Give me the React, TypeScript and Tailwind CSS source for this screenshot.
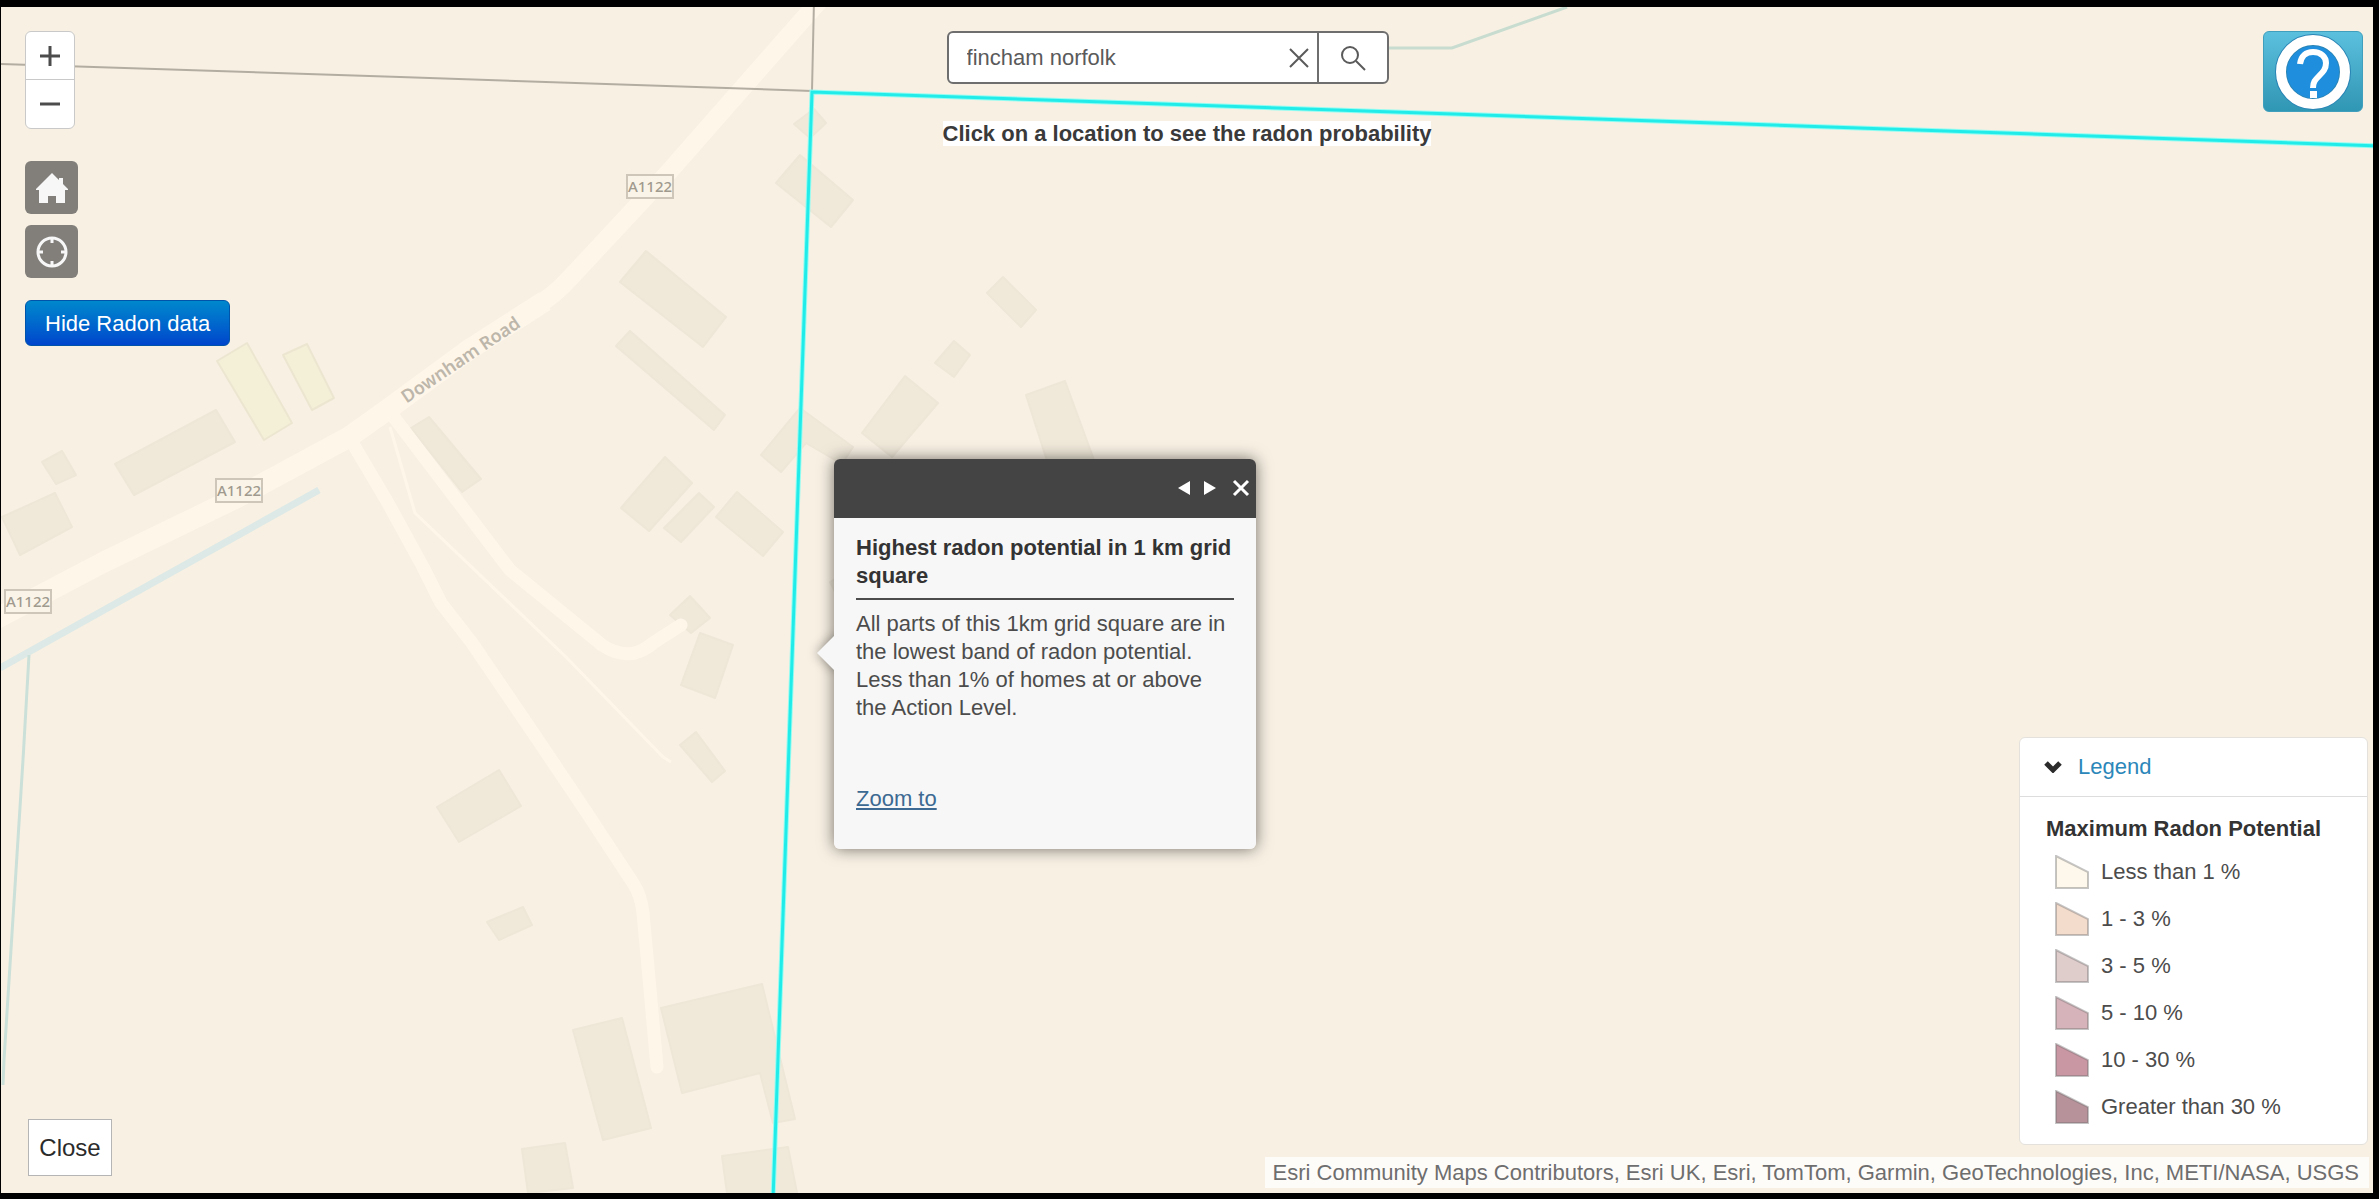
import { useState } from "react";

const buildings = [
  "814,109 826,123 810,138 794,124",
  "800,155 853,200 831,227 776,183",
  "646,251 726,317 703,347 620,282",
  "630,331 725,415 714,430 616,346",
  "665,457 692,483 649,531 621,508",
  "699,493 714,507 681,542 664,528",
  "737,492 783,532 763,556 716,517",
  "800,408 853,447 842,464 806,443 781,472 761,455",
  "905,376 938,403 892,457 862,433",
  "954,341 970,355 954,377 935,363",
  "1003,277 1036,310 1021,327 987,293",
  "1026,395 1065,381 1094,460 1050,470",
  "830,582 840,576 850,590 836,594",
  "2,517 55,493 72,527 20,555",
  "42,462 62,451 76,475 56,484",
  "115,464 216,410 235,442 134,495",
  "429,417 481,479 462,492 411,428",
  "690,596 710,618 691,633 670,615",
  "700,633 733,645 715,698 681,685",
  "696,732 725,771 712,782 680,745",
  "437,807 499,770 521,806 459,842",
  "487,922 523,907 532,925 499,940",
  "573,1030 622,1018 651,1128 603,1140",
  "661,1008 762,984 795,1119 773,1123 760,1073 682,1093",
  "522,1149 565,1143 573,1188 528,1193",
  "722,1156 788,1147 797,1193 727,1193",
];

const greenhouses = [
  "217,361 247,343 292,423 264,440",
  "283,355 307,344 334,398 312,410",
];

const roadBadges = [
  { x: 627, y: 175 },
  { x: 216, y: 479 },
  { x: 5, y: 590 },
];

const legendItems = [
  { label: "Less than 1 %", color: "#fef8ec" },
  { label: "1 - 3 %", color: "#f4dccd" },
  { label: "3 - 5 %", color: "#dfcdcc" },
  { label: "5 - 10 %", color: "#d6b3ba" },
  { label: "10 - 30 %", color: "#c996a3" },
  { label: "Greater than 30 %", color: "#b7929b" },
];

function BaseMap() {
  return (
    <svg
      className="absolute inset-0 h-full w-full"
      viewBox="1 7 2372 1186"
      preserveAspectRatio="xMidYMid slice"
      aria-hidden="true"
    >
      <g fill="#f0e9da" stroke="#eee6d7" strokeWidth="2" strokeLinejoin="round">
        {buildings.map((points) => (
          <polygon key={points} points={points} />
        ))}
      </g>
      <g fill="#f4efd7" stroke="#ece6d1" strokeWidth="2" strokeLinejoin="round">
        {greenhouses.map((points) => (
          <polygon key={points} points={points} />
        ))}
      </g>

      {/* streams */}
      <g fill="none">
        <path d="M0 668L319 490" stroke="#dce9e6" strokeWidth="7" />
        <path d="M29 655L23 760L4 1060L3 1085" stroke="#cbe0d8" strokeWidth="3" />
        <path d="M1380 48H1452L1567 7" stroke="#c8ddd0" strokeWidth="3" />
      </g>

      {/* roads */}
      <g fill="none" stroke="#fff6ea" strokeLinejoin="round">
        <path d="M390 427L415 513L566 657L663 757L671 762" strokeWidth="3" />
        <path
          d="M349 437L388 503L423 567L441 603L472 643L538 740L587 813L633 883Q641 895 643 913L648 967L657 1067"
          strokeWidth="13"
          strokeLinecap="round"
        />
        <path
          d="M390 412L459 503L510 570L602 645Q618 656 635 653Q645 650 653 643L681 625"
          strokeWidth="13"
          strokeLinecap="round"
        />
        <path d="M820 0L667 174L570 278Q556 294 535 307" strokeWidth="18" />
        <path d="M545 301L470 349L387 410L349 437L238 497L102 563L-10 622" strokeWidth="21" />
      </g>

      {/* 1 km grid */}
      <path d="M0 64L400 77L812 91M812 91L814 0" fill="none" stroke="#b3aca1" strokeWidth="2" />
      <g fill="none">
        <path d="M773 1200L812 92L2380 146" stroke="#96fcf1" strokeWidth="5" />
        <path d="M773 1200L812 92L2380 146" stroke="#22ecea" strokeWidth="3" />
      </g>

      <g fontFamily="Noto Sans, Open Sans, sans-serif" fontWeight="500" fill="#a09a8e">
        {roadBadges.map((badge) => (
          <g key={badge.x}>
            <rect
              x={badge.x}
              y={badge.y}
              width="46"
              height="23"
              fill="#faf4e8"
              stroke="#cdc6b9"
              strokeWidth="2"
            />
            <text x={badge.x + 23} y={badge.y + 17} fontSize="15" textAnchor="middle">
              A1122
            </text>
          </g>
        ))}
        <text
          transform="translate(464 365) rotate(-34)"
          fontSize="18"
          fontWeight="600"
          textAnchor="middle"
          fill="#bdb6aa"
        >
          Downham Road
        </text>
      </g>
    </svg>
  );
}

function MapControls({
  showRadon,
  onToggle,
}: {
  showRadon: boolean;
  onToggle: () => void;
}) {
  return (
    <div className="ml-6 flex flex-col items-start justify-self-start">
      <div className="flex flex-col rounded-md border border-[#c9c9c9] bg-white">
        <button
          aria-label="Zoom in"
          className="flex h-12 w-12 items-center justify-center border-b border-[#c9c9c9]"
        >
          <svg width="20" height="20" viewBox="0 0 20 20" stroke="#4c4c4c" strokeWidth="3">
            <path d="M0 10H20M10 0V20" />
          </svg>
        </button>
        <button aria-label="Zoom out" className="flex h-12 w-12 items-center justify-center">
          <svg width="20" height="20" viewBox="0 0 20 20" stroke="#4c4c4c" strokeWidth="3">
            <path d="M0 10H20" />
          </svg>
        </button>
      </div>
      <button
        aria-label="Default extent"
        className="mt-8 flex h-[53px] w-[53px] items-center justify-center rounded-md bg-[#827f7b]"
      >
        <svg width="32" height="32" viewBox="0 0 32 32" fill="#f7f7f7">
          <path d="M16 1L23 8V6H27V12L32 17V18H29V31H20V24H12V31H3V18H0V17Z" />
        </svg>
      </button>
      <button
        aria-label="Find my location"
        className="mt-[11px] flex h-[53px] w-[53px] items-center justify-center rounded-md bg-[#827f7b]"
      >
        <svg width="32" height="32" viewBox="0 0 32 32" fill="none" stroke="#f7f7f7">
          <circle cx="16" cy="16" r="14" strokeWidth="3" />
          <path d="M16 2V7M16 25V30M2 16H7M25 16H30" strokeWidth="3" />
        </svg>
      </button>
      <button
        onClick={onToggle}
        className="mt-[22px] h-[46px] rounded-md border border-[#0055aa] bg-linear-to-b from-[#0088cc] to-[#0044cc] px-[19px] text-[22px] text-white"
      >
        {showRadon ? "Hide Radon data" : "Show Radon data"}
      </button>
    </div>
  );
}

function SearchBox() {
  const [query, setQuery] = useState("fincham norfolk");

  return (
    <div>
      <form
        onSubmit={(e) => e.preventDefault()}
        className="ml-1 flex h-[53px] w-[442px] rounded-md border-2 border-[#6e6e6e] bg-white"
      >
        <input
          type="text"
          aria-label="Find address or place"
          value={query}
          onChange={(e) => setQuery(e.target.value)}
          className="min-w-0 flex-1 pl-[18px] text-[22px] text-[#5a5a5a] outline-none"
        />
        <button
          type="button"
          aria-label="Clear search"
          onClick={() => setQuery("")}
          className="flex w-9 items-center justify-center"
        >
          <svg width="20" height="20" viewBox="0 0 20 20" stroke="#5a5a5a" strokeWidth="2">
            <path d="M1 1L19 19M19 1L1 19" />
          </svg>
        </button>
        <button
          type="submit"
          aria-label="Search"
          className="flex w-[70px] items-center justify-center border-l-2 border-[#6e6e6e]"
        >
          <svg width="26" height="26" viewBox="0 0 26 26" fill="none" stroke="#5a5a5a" strokeWidth="2">
            <circle cx="10" cy="10" r="8" />
            <path d="M16 16L25 25" />
          </svg>
        </button>
      </form>
      <p className="mt-9 text-[22px] leading-7 font-bold text-[#3a3a3a]">
        <span className="bg-white">Click on a location to see the radon probability</span>
      </p>
    </div>
  );
}

function HelpButton() {
  return (
    <button
      aria-label="Help"
      className="mr-2.5 flex h-[81px] w-[100px] items-center justify-center justify-self-end rounded-md border border-[#3f9fbd] bg-linear-to-b from-[#5bc0de] to-[#2f96b4]"
    >
      <svg width="76" height="76" viewBox="0 0 76 76" fill="none">
        <circle cx="38" cy="38" r="32" fill="#1f8fdd" stroke="#2a84b5" strokeWidth="12" />
        <circle cx="38" cy="38" r="32" stroke="#ffffff" strokeWidth="10" />
        <path
          d="M25 30C26 22 31 18 38 18C46 18 51 23 51 29C51 35 48 38 44 42C40 46 38 48 38 54"
          stroke="#ffffff"
          strokeWidth="6"
        />
        <rect x="35" y="57" width="7" height="7" fill="#ffffff" />
      </svg>
    </button>
  );
}

function RadonPopup({ onClose }: { onClose: () => void }) {
  return (
    <section className="absolute top-[452px] left-[833px] w-[422px] rounded-md shadow-[0_0_16px_rgba(0,0,0,0.55)]">
      <div className="absolute top-[182px] -left-3 h-6 w-6 rotate-45 bg-[#f7f7f7] shadow-[0_0_12px_rgba(0,0,0,0.4)]" />
      <header className="relative flex h-[59px] items-center justify-end gap-3 rounded-t-md bg-[#444444] pr-1.5 pb-0.5">
        <button aria-label="Previous feature" className="w-3.5">
          <svg width="12" height="14" viewBox="0 0 12 14" fill="#ffffff">
            <path d="M12 0V14L0 7Z" />
          </svg>
        </button>
        <button aria-label="Next feature" className="w-3.5">
          <svg width="12" height="14" viewBox="0 0 12 14" fill="#ffffff">
            <path d="M0 0V14L12 7Z" />
          </svg>
        </button>
        <button aria-label="Close popup" onClick={onClose} className="ml-0.5">
          <svg width="18" height="18" viewBox="0 0 18 18" stroke="#ffffff" strokeWidth="3">
            <path d="M2 2L16 16M16 2L2 16" />
          </svg>
        </button>
      </header>
      <div className="relative rounded-b-md bg-[#f7f7f7] px-[22px] pt-4 pb-9 text-[22px] leading-7 text-[#4c4c4c]">
        <h2 className="border-b-2 border-[#4c4c4c] pb-2 font-bold text-[#333333]">
          Highest radon potential in 1 km grid square
        </h2>
        <p className="mt-2.5">
          All parts of this 1km grid square are in the lowest band of radon potential. Less than 1%
          of homes at or above the Action Level.
        </p>
        <a href="#" className="mt-[63px] inline-block text-[#3d6a92] underline">
          Zoom to
        </a>
      </div>
    </section>
  );
}

function Legend() {
  const [open, setOpen] = useState(true);

  return (
    <section className="mr-[5px] w-[349px] rounded-md border border-[#e4e1dc] bg-white text-[22px] leading-7">
      <button
        onClick={() => setOpen(!open)}
        className="flex h-[59px] w-full items-center gap-4 border-b border-[#dddddd] pl-6 text-[#2b87b9]"
      >
        <svg width="18" height="12" viewBox="0 0 18 12" fill="none" stroke="#2b2b2b" strokeWidth="5">
          <path d="M2 2L9 9L16 2" />
        </svg>
        Legend
      </button>
      {open && (
        <div className="pt-[18px] pb-3.5">
          <h2 className="pl-[26px] font-bold text-[#333333]">Maximum Radon Potential</h2>
          <ul className="mt-[5px]">
            {legendItems.map((item) => (
              <li key={item.label} className="flex h-[47px] items-center gap-3 pl-[35px] text-[#4c4c4c]">
                <svg width="34" height="34" viewBox="0 0 34 34">
                  <path
                    d="M1 1L33 17V33H1Z"
                    fill={item.color}
                    stroke="#6e6e6e"
                    strokeOpacity="0.4"
                    strokeWidth="2"
                  />
                </svg>
                {item.label}
              </li>
            ))}
          </ul>
        </div>
      )}
    </section>
  );
}

export default function App() {
  const [showRadon, setShowRadon] = useState(true);
  const [showPopup, setShowPopup] = useState(true);

  return (
    <div className="flex min-h-screen bg-black pt-[7px] pr-1.5 pb-1.5 pl-px font-['Liberation_Sans',Arial,sans-serif]">
      <main className="relative flex flex-1 flex-col justify-between overflow-hidden bg-[#f8f0e3]">
        <BaseMap />
        {showPopup && <RadonPopup onClose={() => setShowPopup(false)} />}

        <div className="relative grid grid-cols-[1fr_auto_1fr] items-start pt-6">
          <MapControls showRadon={showRadon} onToggle={() => setShowRadon(!showRadon)} />
          <SearchBox />
          <HelpButton />
        </div>

        <div className="relative flex items-end justify-between">
          <button className="mb-[17px] ml-[27px] h-[57px] w-[84px] border border-[#b5b5b5] bg-white text-2xl text-[#2b2b2b]">
            Close
          </button>
          <div className="flex flex-col items-end gap-3 pb-[5px]">
            <Legend />
            <p className="mr-1 bg-white/80 pr-2.5 pl-2 text-[22px] leading-[31px] text-[#6e6e6e]">
              Esri Community Maps Contributors, Esri UK, Esri, TomTom, Garmin, GeoTechnologies, Inc,
              METI/NASA, USGS
            </p>
          </div>
        </div>
      </main>
    </div>
  );
}
